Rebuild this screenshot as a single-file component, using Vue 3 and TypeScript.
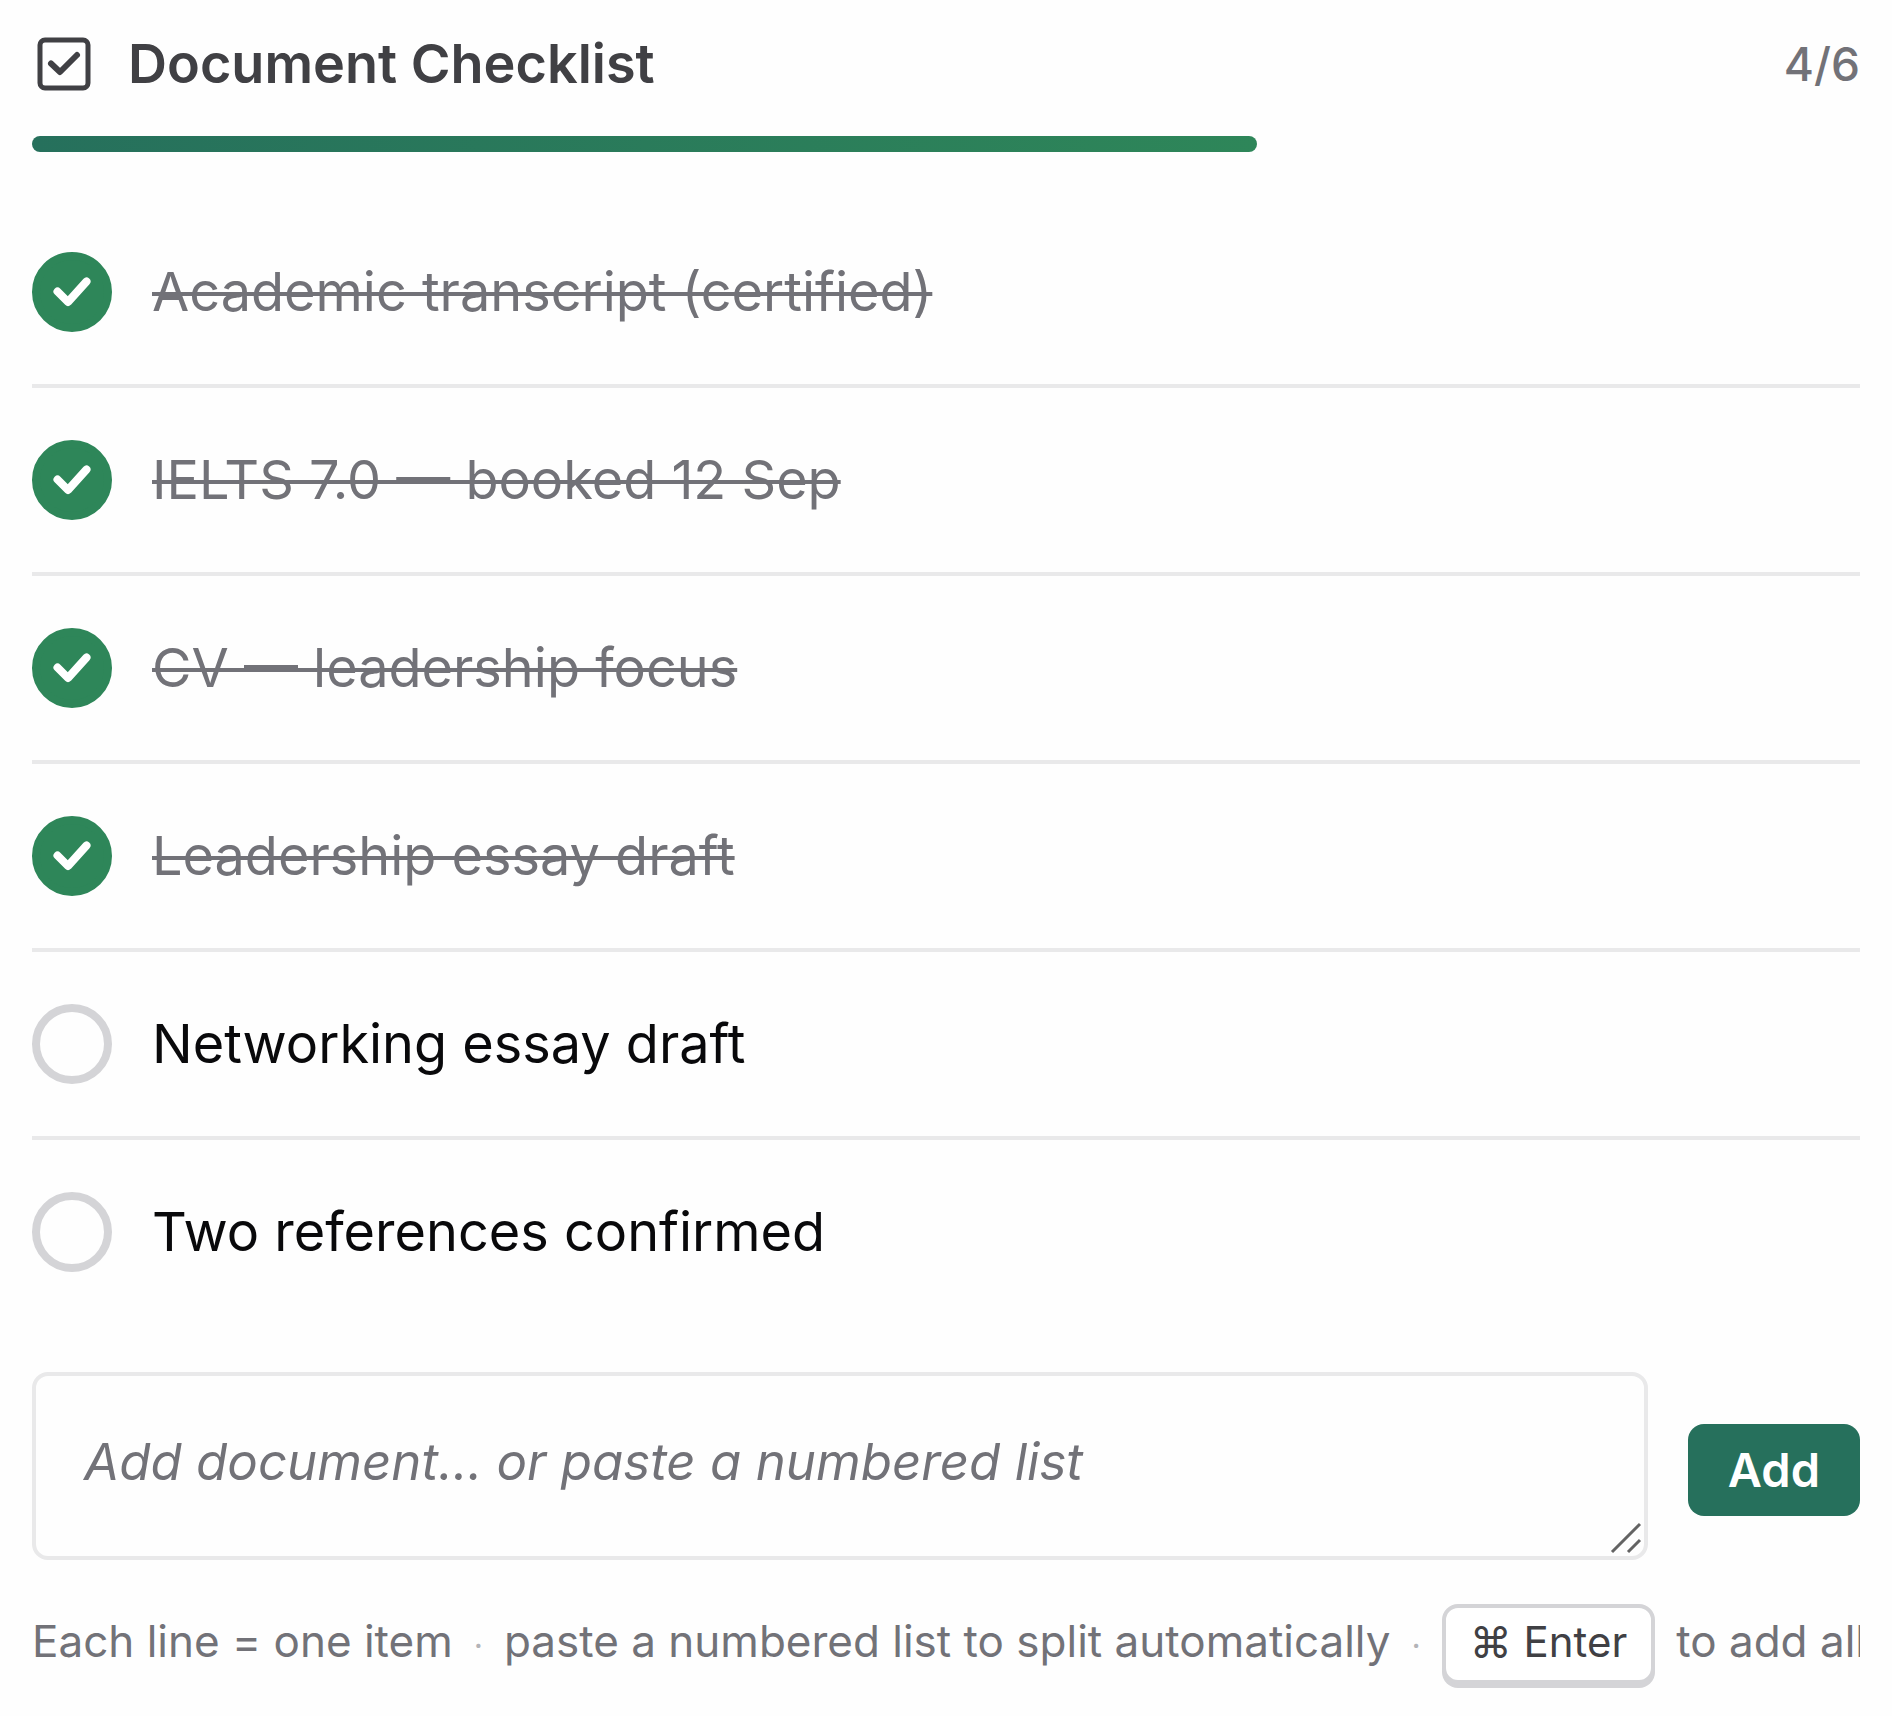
<script setup lang="ts">
import { computed, ref } from 'vue'

interface ChecklistItem {
  id: number
  label: string
  done: boolean
}

const items = ref<ChecklistItem[]>([
  { id: 1, label: 'Academic transcript (certified)', done: true },
  { id: 2, label: 'IELTS 7.0 — booked 12 Sep', done: true },
  { id: 3, label: 'CV — leadership focus', done: true },
  { id: 4, label: 'Leadership essay draft', done: true },
  { id: 5, label: 'Networking essay draft', done: false },
  { id: 6, label: 'Two references confirmed', done: false },
])

const draft = ref('')

const doneCount = computed(() => items.value.filter((item) => item.done).length)
const percent = computed(() =>
  items.value.length ? Math.round((doneCount.value / items.value.length) * 100) : 0,
)

// Each non-empty line becomes one item; leading list numbers are dropped.
function addItems(): void {
  const labels = draft.value
    .split('\n')
    .map((line) => line.replace(/^\s*\d+[.)]\s*/, '').trim())
    .filter(Boolean)
  for (const label of labels) {
    items.value.push({ id: items.value.length + 1, label, done: false })
  }
  draft.value = ''
}
</script>

<template>
  <main class="checklist">
    <header class="head">
      <svg class="head-icon" viewBox="0 0 64 64" fill="none" aria-hidden="true">
        <rect x="8" y="8" width="48" height="48" rx="5" />
        <path d="M19 31.5 L28 40 L45 23" stroke-width="6" />
      </svg>
      <h1 class="title">Document Checklist</h1>
      <span class="count">{{ doneCount }}/{{ items.length }}</span>
    </header>

    <div class="track" role="progressbar" aria-label="Documents completed" :aria-valuenow="percent" aria-valuemin="0" aria-valuemax="100">
      <div class="fill" :style="{ width: percent + '%' }"></div>
    </div>

    <ul class="items">
      <li v-for="item in items" :key="item.id" class="item">
        <span class="check">
          <input :id="'item-' + item.id" v-model="item.done" type="checkbox" class="box" />
          <svg v-if="item.done" class="tick" viewBox="0 0 80 80" fill="none" aria-hidden="true">
            <path d="M25.5 39.5 L36 50 L54.5 29.5" />
          </svg>
        </span>
        <label :for="'item-' + item.id" class="label" :class="{ done: item.done }">{{ item.label }}</label>
      </li>
    </ul>

    <form class="add" @submit.prevent="addItems">
      <div class="field">
        <textarea
          v-model="draft"
          class="input"
          rows="1"
          aria-label="Add document"
          placeholder="Add document… or paste a numbered list"
          @keydown.meta.enter="addItems"
        ></textarea>
        <svg class="grip" viewBox="0 0 32 32" fill="none" aria-hidden="true">
          <path d="M2 30 L30 2 M18 30 L30 18" />
        </svg>
      </div>
      <button type="submit" class="button">Add</button>
    </form>

    <p class="hint">
      <span>Each line = one item</span>
      <span class="dot">·</span>
      <span>paste a numbered list to split automatically</span>
      <span class="dot">·</span>
      <kbd class="key">⌘ Enter</kbd>
      <span>to add all</span>
    </p>
  </main>
</template>

<style>
body {
  margin: 0;
  background: #fefefe;
}
</style>

<style scoped>
.checklist {
  padding: 32px 32px 24px;
  font-family: Inter, 'Liberation Sans', sans-serif;
  color: #09090b;
}

.head {
  display: flex;
  align-items: center;
  gap: 32px;
  height: 64px;
}

.head-icon {
  flex: none;
  width: 64px;
  height: 64px;
  stroke: #404044;
  stroke-width: 5;
  stroke-linecap: round;
  stroke-linejoin: round;
}

.title {
  flex: 1;
  margin: 0;
  font-size: 54px;
  line-height: 66px;
  font-weight: 600;
  color: #404044;
}

.count {
  font-size: 46px;
  line-height: 64px;
  font-weight: 500;
  color: #727278;
}

.track {
  height: 16px;
  margin-top: 40px;
}

.fill {
  height: 100%;
  border-radius: 8px;
  background: linear-gradient(90deg, #26705c, #2e8659);
}

.items {
  margin: 48px 0 0;
  padding: 0;
  list-style: none;
}

.item {
  display: flex;
  align-items: center;
  gap: 40px;
  padding: 52px 0;
}

.item + .item {
  border-top: 4px solid #e9e9ea;
}

.check {
  display: grid;
  flex: none;
  width: 80px;
  height: 80px;
}

.box {
  grid-area: 1 / 1;
  box-sizing: border-box;
  width: 80px;
  height: 80px;
  margin: 0;
  appearance: none;
  border: 8px solid #d4d4d7;
  border-radius: 50%;
  background: #fefefe;
}

.box:checked {
  border-color: #2e8659;
  background: #2e8659;
}

.tick {
  grid-area: 1 / 1;
  width: 80px;
  height: 80px;
  pointer-events: none;
  stroke: #ffffff;
  stroke-width: 8;
  stroke-linecap: round;
  stroke-linejoin: round;
}

.label {
  font-size: 54px;
  line-height: 80px;
}

.label.done {
  color: #727278;
  text-decoration: line-through;
  text-decoration-thickness: 4px;
}

.add {
  display: flex;
  align-items: center;
  gap: 40px;
  margin-top: 48px;
}

.field {
  position: relative;
  display: flex;
  flex: 1;
  padding-bottom: 8px;
}

.input {
  flex: 1;
  box-sizing: border-box;
  height: 188px;
  padding: 54px 48px;
  resize: none;
  overflow: hidden;
  border: 4px solid #e9e9ea;
  border-radius: 16px;
  outline: none;
  background: #fefefe;
  font-family: inherit;
  font-size: 51px;
  line-height: 64px;
  color: #09090b;
}

.input::placeholder {
  color: #727278;
  font-style: italic;
  opacity: 1;
}

.grip {
  position: absolute;
  right: 6px;
  bottom: 14px;
  width: 32px;
  height: 32px;
  pointer-events: none;
  stroke: #636363;
  stroke-width: 3;
}

.button {
  padding: 14px 40px;
  border: 0;
  border-radius: 16px;
  background: #26705c;
  font-family: inherit;
  font-size: 47px;
  line-height: 64px;
  font-weight: 600;
  color: #ffffff;
}

.hint {
  display: flex;
  align-items: baseline;
  gap: 21px;
  margin: 36px 0 0;
  padding-bottom: 4px;
  overflow: hidden;
  white-space: nowrap;
  font-size: 44px;
  line-height: 56px;
  color: #727278;
}

.dot {
  font-size: 32px;
  color: #b4b4b8;
}

.key {
  padding: 6px 24px 10px;
  border: 4px solid #d4d4d7;
  border-radius: 16px;
  box-shadow: 0 4px 0 #d4d4d7;
  background: #ffffff;
  font-family: inherit;
  font-size: 42px;
  line-height: 56px;
  color: #404044;
}
</style>
